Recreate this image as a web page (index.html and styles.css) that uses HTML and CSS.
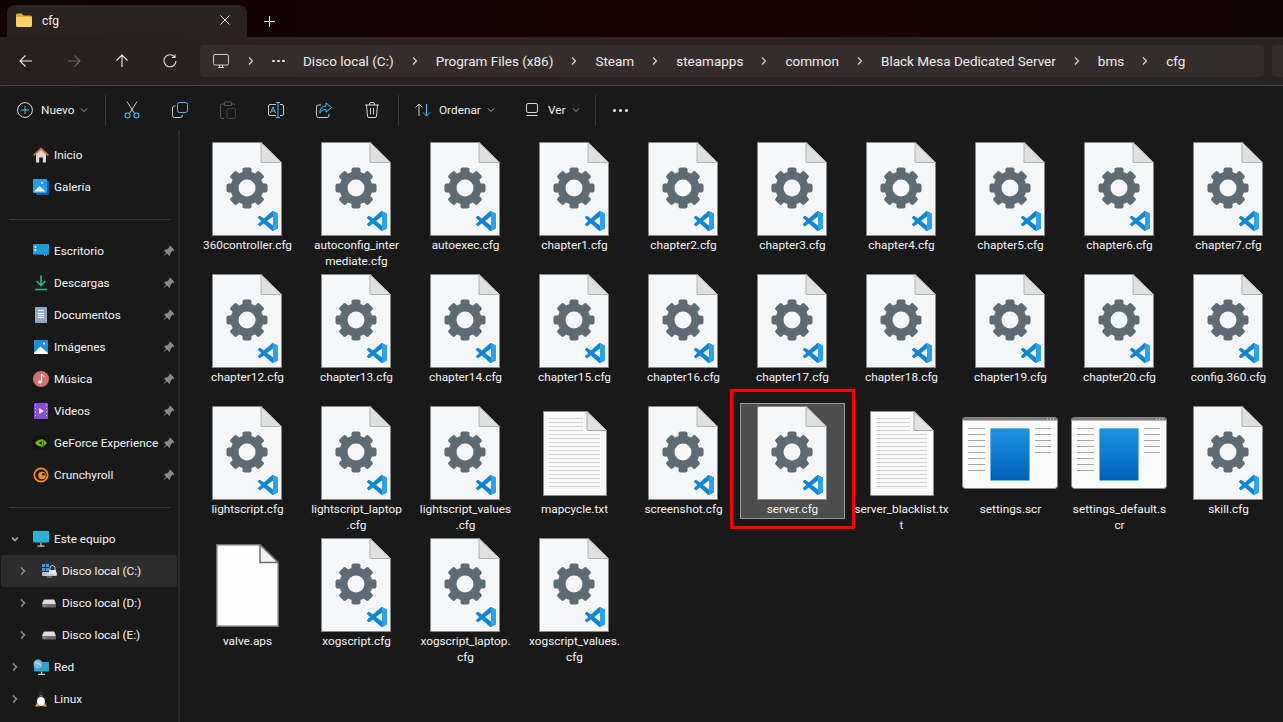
FILE: index.html
```html
<!DOCTYPE html>
<html lang="es">
<head>
    <meta charset="UTF-8">
    <title>cfg - Explorador de archivos</title>
    <link rel="stylesheet" href="styles.css">
</head>
<body>
<!-- shared icons -->
<svg class="defs" width="0" height="0">
    <symbol id="gear" viewBox="0 0 44 44">
        <g fill="#5f6b72">
            <rect x="17.5" y="1.5" width="9" height="41" rx="2"/>
            <rect x="17.5" y="1.5" width="9" height="41" rx="2" transform="rotate(45 22 22)"/>
            <rect x="17.5" y="1.5" width="9" height="41" rx="2" transform="rotate(90 22 22)"/>
            <rect x="17.5" y="1.5" width="9" height="41" rx="2" transform="rotate(135 22 22)"/>
            <circle cx="22" cy="22" r="16.5"/>
        </g>
        <circle cx="22" cy="22" r="8.5" fill="#f5f7f9"/>
    </symbol>
    <symbol id="vscode" viewBox="0 0 24 24">
        <path fill="#0e86d4" d="M23.15 2.587L18.21.21a1.494 1.494 0 0 0-1.705.29l-9.46 8.63-4.12-3.128a.999.999 0 0 0-1.276.057L.327 7.261A1 1 0 0 0 .326 8.74L3.899 12 .326 15.26a1 1 0 0 0 .001 1.479L1.65 17.94a.999.999 0 0 0 1.276.057l4.12-3.128 9.46 8.63a1.492 1.492 0 0 0 1.704.29l4.942-2.377A1.5 1.5 0 0 0 24 20.06V3.939a1.5 1.5 0 0 0-.85-1.352zm-5.146 14.861L10.826 12l7.178-5.448v10.896z"/>
        <path fill="#2ba2ec" d="M18 0.1l5.15 2.487A1.5 1.5 0 0 1 24 3.939v16.12a1.5 1.5 0 0 1-.85 1.354L18 23.9z"/>
    </symbol>
    <symbol id="cfg" viewBox="0 0 70 94">
        <path d="M.5.5H49L69.5 20.5V93.5H.5Z" fill="#f5f7f9" stroke="#85898c"/>
        <path d="M49 .5V20.5H69.5Z" fill="#dfe0e0" stroke="#b0b2b3"/>
        <use href="#gear" x="13" y="24" width="44" height="44"/>
        <use href="#vscode" x="46" y="69" width="20" height="20"/>
    </symbol>
    <symbol id="txt" viewBox="0 0 64 85">
        <path d="M.5.5H44L63.5 19.5V84.5H.5Z" fill="#fafafa" stroke="#8d8d8d"/>
        <path d="M44 .5V19.5H63.5Z" fill="#e2e2e2" stroke="#a8a8a8"/>
        <path d="M6 7.5H40M6 11.5H40M6 15.5H40M6 19.5H40M6 23.5H57M6 27.5H57M6 31.5H57M6 35.5H57M6 39.5H57M6 43.5H57M6 47.5H57M6 51.5H57M6 55.5H57M6 59.5H57M6 63.5H57M6 67.5H57M6 71.5H57M6 75.5H57" stroke="#d2d2d2"/>
    </symbol>
    <symbol id="aps" viewBox="0 0 63 83">
        <path d="M.75.75H44L62.25 18.5V82.25H.75Z" fill="#fdfdfd" stroke="#707070" stroke-width="1.500"/>
        <path d="M44 .75V18.5H62.25Z" fill="#f2f2f2" stroke="#707070" stroke-width="1.500"/>
    </symbol>
    <linearGradient id="scrblue" x1="0" y1="0" x2="0" y2="1">
        <stop offset="0" stop-color="#1b95e0"/>
        <stop offset="1" stop-color="#0061b5"/>
    </linearGradient>
    <symbol id="scr" viewBox="0 0 96 72">
        <rect x=".5" y=".5" width="95" height="71" rx="3" fill="#fbfbfb" stroke="#8a8a88"/>
        <path d="M0 3.500A3 3 0 0 1 3 .5H93A3 3 0 0 1 96 3.500Z" fill="#7e7d7a"/>
        <path d="M85 2H86M88 2H89M91 2H92" stroke="#d8d8d8"/>
        <path d="M6 11.500H23M6 17.500H23M6 23.500H23M6 29.500H23M6 35.500H23M6 41.500H23M6 47.500H23M6 53.500H23M73 11.500H89M73 17.500H89M73 23.500H89M73 29.500H89M73 35.500H89" stroke="#a8a8a8"/>
        <rect x="28.500" y="11.500" width="39" height="52" rx="1" fill="url(#scrblue)" stroke="#6cb6ea"/>
    </symbol>
    <symbol id="pin" viewBox="0 0 12 12">
        <path fill="#868b90" d="M7 .6l4.400 4.400-1 .9-.8-.2L7.400 7.900l-.2 2-1 .9L3.900 8.500 1 11l-.3-.3L3.300 7.800 1.100 5.500l1-.9 2-.2 2.100-2.100-.2-.8Z"/>
    </symbol>
    <symbol id="drive" viewBox="0 0 16 16">
        <path fill="#dcdcdc" d="M3 4.500h10l2 4.500H1Z"/>
        <rect x="1" y="9" width="14" height="3.500" rx=".8" fill="#6b6b6b"/>
        <rect x="2.500" y="10" width="2" height="1.200" fill="#58d06a"/>
    </symbol>
    <symbol id="chev" viewBox="0 0 8 8">
        <path d="M2 .5 5.500 4 2 7.500" fill="none" stroke="currentColor"/>
    </symbol>
    <symbol id="caret" viewBox="0 0 8 8">
        <path d="M1 2.500 4 5.500 7 2.500" fill="none" stroke="currentColor"/>
    </symbol>
</svg>

<div class="titlebar">
    <div class="tab">
        <svg class="tab-folder" viewBox="0 0 16 14" width="16" height="14">
            <path fill="#e8a822" d="M0 2a1.500 1.500 0 0 1 1.500-1.500h4L7.500 2.500h7A1.500 1.500 0 0 1 16 4v1H0Z"/>
            <path fill="#fcd364" d="M0 4h16v8.500a1.500 1.500 0 0 1-1.500 1.500h-13A1.500 1.500 0 0 1 0 12.500Z"/>
        </svg>
        <span class="tab-name">cfg</span>
        <svg class="tab-close" viewBox="0 0 10 10" width="10" height="10"><path d="M.5.500l9 9M9.500.500l-9 9" stroke="#e6e6e6" fill="none"/></svg>
    </div>
    <svg class="tab-new" viewBox="0 0 11 11" width="11" height="11"><path d="M5.500 0v11M0 5.500h11" stroke="#eee" fill="none"/></svg>
</div>

<div class="navbar">
    <div class="nav-btns">
        <button class="nav-btn"><svg viewBox="0 0 14 14" width="14" height="14"><path d="M13 7H1M6.500 1.500 1 7l5.500 5.500" fill="none" stroke="#efefef" stroke-width="1.100"/></svg></button>
        <button class="nav-btn"><svg viewBox="0 0 14 14" width="14" height="14"><path d="M1 7H13M7.500 1.500 13 7l-5.500 5.500" fill="none" stroke="#6c6766" stroke-width="1.100"/></svg></button>
        <button class="nav-btn"><svg viewBox="0 0 14 14" width="14" height="14"><path d="M7 13V1M1.500 6.500 7 1l5.500 5.500" fill="none" stroke="#efefef" stroke-width="1.100"/></svg></button>
        <button class="nav-btn"><svg viewBox="0 0 14 14" width="14" height="14"><path d="M11.500 2.800A6 6 0 1 0 13 7M12 .5v3H9" fill="none" stroke="#dedede" stroke-width="1.100"/></svg></button>
    </div>
    <div class="address">
        <svg class="addr-pc" viewBox="0 0 16 15" width="16" height="15"><rect x=".5" y=".5" width="15" height="10.500" rx="1.500" fill="none" stroke="#cfcbca"/><path d="M5 13.500h6M6.500 11v2.500M9.500 11v2.500" stroke="#cfcbca" fill="none"/></svg>
        <svg class="chev"><use href="#chev"/></svg>
        <span class="addr-dots"><i></i><i></i><i></i></span>
        <span class="crumb">Disco local (C:)</span>
        <svg class="chev"><use href="#chev"/></svg>
        <span class="crumb">Program Files (x86)</span>
        <svg class="chev"><use href="#chev"/></svg>
        <span class="crumb">Steam</span>
        <svg class="chev"><use href="#chev"/></svg>
        <span class="crumb">steamapps</span>
        <svg class="chev"><use href="#chev"/></svg>
        <span class="crumb">common</span>
        <svg class="chev"><use href="#chev"/></svg>
        <span class="crumb">Black Mesa Dedicated Server</span>
        <svg class="chev"><use href="#chev"/></svg>
        <span class="crumb">bms</span>
        <svg class="chev"><use href="#chev"/></svg>
        <span class="crumb">cfg</span>
    </div>
    <div class="search"></div>
</div>

<div class="toolbar">
    <button class="tool tool-new">
        <svg viewBox="0 0 16 16" width="16" height="16"><circle cx="8" cy="8" r="7.400" fill="none" stroke="#d6d6d6"/><path d="M8 4v8M4 8h8" stroke="#4cc2ff" fill="none"/></svg>
        <span>Nuevo</span>
        <svg class="caret"><use href="#caret"/></svg>
    </button>
    <div class="tool-sep tool-sep-first"></div>
    <button class="tool tool-icon"><svg viewBox="0 0 16 18" width="16" height="18"><path d="M3 .5 10.500 12.500M13 .5 5.500 12.500" fill="none" stroke="#cfcfcf"/><circle cx="3.500" cy="14.500" r="2.500" fill="none" stroke="#4cc2ff" stroke-width="1.100"/><circle cx="12.500" cy="14.500" r="2.500" fill="none" stroke="#4cc2ff" stroke-width="1.100"/></svg></button>
    <button class="tool tool-icon"><svg viewBox="0 0 16 16" width="16" height="16"><rect x="5.500" y=".5" width="10" height="10" rx="2" fill="none" stroke="#4cc2ff"/><path d="M3.500 4H2.500A2 2 0 0 0 .5 6v7.500a2 2 0 0 0 2 2H8A2.500 2.500 0 0 0 10.500 13" fill="none" stroke="#cfcfcf"/></svg></button>
    <button class="tool tool-icon"><svg viewBox="0 0 16 18" width="16" height="18"><path d="M4 3H2a1.500 1.500 0 0 0-1.500 1.500v11.500A1.500 1.500 0 0 0 2 17.500h2M12 3h2a1.500 1.500 0 0 1 1 1M4.500 1h7v3.500h-7Z" fill="none" stroke="#555"/><rect x="7" y="7.500" width="8.500" height="10" rx="1.500" fill="none" stroke="#2c4a5e"/></svg></button>
    <button class="tool tool-icon"><svg viewBox="0 0 16 16" width="16" height="16"><path d="M8 2.500H2A1.500 1.500 0 0 0 .5 4v8A1.500 1.500 0 0 0 2 13.500h6M12 2.500h2A1.500 1.500 0 0 1 15.500 4v8a1.500 1.500 0 0 1-1.500 1.500h-2" fill="none" stroke="#cfcfcf"/><path d="M8 .5h4M8 15.500h4M10 .5v15" fill="none" stroke="#4cc2ff"/><path d="M2.500 11 5 5l2.500 6M3.300 9h3.400" fill="none" stroke="#6fbfe8"/></svg></button>
    <button class="tool tool-icon"><svg viewBox="0 0 16 16" width="16" height="16"><path d="M5 3H2.500A2 2 0 0 0 .5 5v8.500a2 2 0 0 0 2 2H11a2 2 0 0 0 2-2V12" fill="none" stroke="#cfcfcf"/><path d="M10 .8 15.500 5.500 10 10.200V7.500C7 7.500 5 8.500 3.800 11c0-4 2-6.500 6.200-7Z" fill="none" stroke="#4cc2ff"/></svg></button>
    <button class="tool tool-icon"><svg viewBox="0 0 14 16" width="14" height="16"><path d="M0 3h14M4.500 3V2A1.500 1.500 0 0 1 6 .5h2A1.500 1.500 0 0 1 9.500 2V3M1.500 3 2.500 14a1.500 1.500 0 0 0 1.500 1.500h6A1.500 1.500 0 0 0 11.500 14L12.500 3M5.500 6v6.500M8.500 6v6.500" fill="none" stroke="#d6d6d6"/></svg></button>
    <div class="tool-sep"></div>
    <button class="tool tool-sort">
        <svg viewBox="0 0 16 14" width="16" height="14"><path d="M4 13V1M.5 4.500 4 1l3.500 3.500" fill="none" stroke="#cfcfcf"/><path d="M11.500 1V13M8 9.500l3.500 3.500L15 9.500" fill="none" stroke="#4cc2ff"/></svg>
        <span>Ordenar</span>
        <svg class="caret"><use href="#caret"/></svg>
    </button>
    <button class="tool tool-view">
        <svg viewBox="0 0 14 14" width="14" height="14"><rect x="1.500" y=".5" width="11" height="9" rx="1.500" fill="none" stroke="#d6d6d6"/><path d="M1.500 12.500h11" stroke="#d6d6d6" fill="none"/></svg>
        <span>Ver</span>
        <svg class="caret"><use href="#caret"/></svg>
    </button>
    <div class="tool-sep tool-sep-last"></div>
    <button class="tool tool-more"><span class="more-dot"></span><span class="more-dot"></span><span class="more-dot"></span></button>
</div>

<div class="main">
    <nav class="sidebar">
        <a class="side-row">
            <svg class="side-icon" viewBox="0 0 16 16"><path fill="#d9d5d1" d="M3 7l5-4.500L13 7v8.500H9.800V10.500H6.200v5H3Z"/><path fill="#e8752a" d="M8 .5 16 7.800l-1 1.100L8 2.600 1 8.900 0 7.800Z"/></svg>
            <span>Inicio</span>
        </a>
        <a class="side-row">
            <svg class="side-icon" viewBox="0 0 16 16"><rect x="3" y="2" width="13" height="14" rx="1" fill="#0f5ea6"/><rect y="0" width="14" height="14" rx="1" fill="#1fa0ec"/><path fill="#fff" d="M1 12.500 6.500 7l6 5.500Z"/><circle cx="9" cy="4" r="1" fill="#fff"/></svg>
            <span>Galería</span>
        </a>
        <div class="side-sep"></div>
        <a class="side-row">
            <svg class="side-icon" viewBox="0 0 16 16"><rect y="1" width="16" height="11" rx="1" fill="#1f9ad6"/><rect x="1.500" y="3" width="1.800" height="1.800" fill="#fff"/><rect x="1.500" y="6" width="1.800" height="1.800" fill="#fff"/><path d="M0 11h16v1H0Z" fill="#0d6ca8"/><rect x="11" y="11.500" width="1" height="1" fill="#fff"/><rect x="13" y="11.500" width="1" height="1" fill="#fff"/></svg>
            <span>Escritorio</span>
            <svg class="side-pin"><use href="#pin"/></svg>
        </a>
        <a class="side-row">
            <svg class="side-icon" viewBox="0 0 16 16"><path d="M8 .5V10M3.500 6 8 10.500 12.500 6" fill="none" stroke="#2bb392" stroke-width="1.600"/><path d="M2 14.500h12" stroke="#2bb392" stroke-width="1.600"/></svg>
            <span>Descargas</span>
            <svg class="side-pin"><use href="#pin"/></svg>
        </a>
        <a class="side-row">
            <svg class="side-icon" viewBox="0 0 16 16"><rect x="2" width="12" height="16" rx="1" fill="#8fa6c4"/><path d="M5 3.500h6M5 6.500h6M5 8.500h6M5 10.500h6" stroke="#fff"/></svg>
            <span>Documentos</span>
            <svg class="side-pin"><use href="#pin"/></svg>
        </a>
        <a class="side-row">
            <svg class="side-icon" viewBox="0 0 16 16"><rect x="1" y="1" width="14" height="14" fill="#1a8fdc"/><path fill="#fff" d="M1 14 7.500 7.500l7.500 6.500v1H1Z"/><circle cx="11" cy="4.500" r="1.100" fill="#fff"/></svg>
            <span>Imágenes</span>
            <svg class="side-pin"><use href="#pin"/></svg>
        </a>
        <a class="side-row">
            <svg class="side-icon" viewBox="0 0 16 16"><circle cx="8" cy="8" r="8" fill="#d46f70"/><path d="M8.500 3v8" stroke="#fff" stroke-width="1.200"/><path d="M8.500 3c.5 1.500 2.500 1.500 3 3" stroke="#fff" fill="none"/><circle cx="6.800" cy="11" r="1.800" fill="#fff"/></svg>
            <span>Música</span>
            <svg class="side-pin"><use href="#pin"/></svg>
        </a>
        <a class="side-row">
            <svg class="side-icon" viewBox="0 0 16 16"><rect x="1" y="0" width="14" height="16" rx="1" fill="#8a4bd8"/><path fill="#f4eefc" d="M6 5l5 3-5 3Z"/><path d="M2.500 1.500v1M2.500 5v1M2.500 8.500v1M2.500 12v1M13.500 1.500v1M13.500 5v1M13.500 8.500v1M13.500 12v1" stroke="#e3d4f8"/></svg>
            <span>Videos</span>
            <svg class="side-pin"><use href="#pin"/></svg>
        </a>
        <a class="side-row">
            <svg class="side-icon" viewBox="0 0 16 16"><rect width="16" height="16" fill="#121412"/><path fill="#76b900" d="M2 8c2-2.800 4.500-3.700 8-3.700v7.400C6.500 11.700 4 10.800 2 8Z"/><path fill="#121412" d="M6 8c1-1.200 2-1.500 3-1.500v3c-1 0-2-.300-3-1.500Z"/><path fill="#76b900" d="M10.500 4.500 14 8l-3.500 3.500Z"/></svg>
            <span>GeForce Experience</span>
            <svg class="side-pin"><use href="#pin"/></svg>
        </a>
        <a class="side-row">
            <svg class="side-icon" viewBox="0 0 16 16"><circle cx="8" cy="8" r="6.700" fill="none" stroke="#f78b24" stroke-width="1.800"/><circle cx="9" cy="8.500" r="3.800" fill="#f78b24"/><circle cx="10.300" cy="7.200" r="1.300" fill="#191919"/></svg>
            <span>Crunchyroll</span>
            <svg class="side-pin"><use href="#pin"/></svg>
        </a>
        <div class="side-sep"></div>
        <a class="side-row">
            <svg class="side-arrow side-arrow-open"><use href="#caret"/></svg>
            <svg class="side-icon" viewBox="0 0 16 16"><rect width="16" height="11.500" rx="1" fill="#2ab3d8"/><path d="M8 11.500V15M4.500 15.200h7" stroke="#c5c9cc" stroke-width="1.200"/></svg>
            <span>Este equipo</span>
        </a>
        <a class="side-row side-sub side-active">
            <svg class="side-arrow"><use href="#chev"/></svg>
            <svg class="side-icon" viewBox="0 0 16 16"><path fill="#3d9be8" d="M1 1h3v3H1ZM5 1h3v3H5ZM1 5h3v3H1ZM5 5h3v3H5Z"/><rect x="1" y="9" width="15" height="4" rx="1" fill="#c8ccd0"/><path d="M9 8V5a2.500 2.500 0 0 1 5 0v3" fill="none" stroke="#c8ccd0"/><rect x="8" y="7" width="7" height="4" fill="#e5e5e5"/><rect x="2" y="10.500" width="2" height="1" fill="#4fc466"/><path d="M6 14h5" stroke="#999"/></svg>
            <span>Disco local (C:)</span>
        </a>
        <a class="side-row side-sub">
            <svg class="side-arrow"><use href="#chev"/></svg>
            <svg class="side-icon"><use href="#drive"/></svg>
            <span>Disco local (D:)</span>
        </a>
        <a class="side-row side-sub">
            <svg class="side-arrow"><use href="#chev"/></svg>
            <svg class="side-icon"><use href="#drive"/></svg>
            <span>Disco local (E:)</span>
        </a>
        <a class="side-row">
            <svg class="side-arrow"><use href="#chev"/></svg>
            <svg class="side-icon" viewBox="0 0 16 16"><rect x="1" y="3" width="15" height="9.500" rx="1" fill="#2aa5d0"/><path d="M8.500 12.500V15M5 15.300h7" stroke="#c5c9cc" stroke-width="1.200"/><circle cx="5" cy="5" r="4.500" fill="#7fb6e6"/><path d="M2 3c2 .5 2 2 4 2s1 2 2 2" stroke="#d8ecfa" fill="none"/></svg>
            <span>Red</span>
        </a>
        <a class="side-row">
            <svg class="side-arrow"><use href="#chev"/></svg>
            <svg class="side-icon" viewBox="0 0 16 16"><ellipse cx="8" cy="3.500" rx="2.600" ry="3.200" fill="#2e2e2e"/><ellipse cx="8" cy="10" rx="5" ry="5.500" fill="#2e2e2e"/><ellipse cx="8" cy="10.500" rx="4" ry="4.500" fill="#fff"/><path fill="#eda21f" d="M7 4.500h2L8 6ZM2 15.500l2-3.500 2.500 3.500ZM14 15.500l-2-3.500-2.500 3.500Z"/></svg>
            <span>Linux</span>
        </a>
    </nav>

    <section class="files">
        <div class="file"><svg class="ico-cfg"><use href="#cfg"/></svg><div class="file-name">360controller.cfg</div></div>
        <div class="file"><svg class="ico-cfg"><use href="#cfg"/></svg><div class="file-name">autoconfig_inter<br>mediate.cfg</div></div>
        <div class="file"><svg class="ico-cfg"><use href="#cfg"/></svg><div class="file-name">autoexec.cfg</div></div>
        <div class="file"><svg class="ico-cfg"><use href="#cfg"/></svg><div class="file-name">chapter1.cfg</div></div>
        <div class="file"><svg class="ico-cfg"><use href="#cfg"/></svg><div class="file-name">chapter2.cfg</div></div>
        <div class="file"><svg class="ico-cfg"><use href="#cfg"/></svg><div class="file-name">chapter3.cfg</div></div>
        <div class="file"><svg class="ico-cfg"><use href="#cfg"/></svg><div class="file-name">chapter4.cfg</div></div>
        <div class="file"><svg class="ico-cfg"><use href="#cfg"/></svg><div class="file-name">chapter5.cfg</div></div>
        <div class="file"><svg class="ico-cfg"><use href="#cfg"/></svg><div class="file-name">chapter6.cfg</div></div>
        <div class="file"><svg class="ico-cfg"><use href="#cfg"/></svg><div class="file-name">chapter7.cfg</div></div>

        <div class="file"><svg class="ico-cfg"><use href="#cfg"/></svg><div class="file-name">chapter12.cfg</div></div>
        <div class="file"><svg class="ico-cfg"><use href="#cfg"/></svg><div class="file-name">chapter13.cfg</div></div>
        <div class="file"><svg class="ico-cfg"><use href="#cfg"/></svg><div class="file-name">chapter14.cfg</div></div>
        <div class="file"><svg class="ico-cfg"><use href="#cfg"/></svg><div class="file-name">chapter15.cfg</div></div>
        <div class="file"><svg class="ico-cfg"><use href="#cfg"/></svg><div class="file-name">chapter16.cfg</div></div>
        <div class="file"><svg class="ico-cfg"><use href="#cfg"/></svg><div class="file-name">chapter17.cfg</div></div>
        <div class="file"><svg class="ico-cfg"><use href="#cfg"/></svg><div class="file-name">chapter18.cfg</div></div>
        <div class="file"><svg class="ico-cfg"><use href="#cfg"/></svg><div class="file-name">chapter19.cfg</div></div>
        <div class="file"><svg class="ico-cfg"><use href="#cfg"/></svg><div class="file-name">chapter20.cfg</div></div>
        <div class="file"><svg class="ico-cfg"><use href="#cfg"/></svg><div class="file-name">config.360.cfg</div></div>

        <div class="file"><svg class="ico-cfg"><use href="#cfg"/></svg><div class="file-name">lightscript.cfg</div></div>
        <div class="file"><svg class="ico-cfg"><use href="#cfg"/></svg><div class="file-name">lightscript_laptop<br>.cfg</div></div>
        <div class="file"><svg class="ico-cfg"><use href="#cfg"/></svg><div class="file-name">lightscript_values<br>.cfg</div></div>
        <div class="file"><svg class="ico-txt"><use href="#txt"/></svg><div class="file-name">mapcycle.txt</div></div>
        <div class="file"><svg class="ico-cfg"><use href="#cfg"/></svg><div class="file-name">screenshot.cfg</div></div>
        <div class="file file-selected"><svg class="ico-cfg"><use href="#cfg"/></svg><div class="file-name">server.cfg</div></div>
        <div class="file"><svg class="ico-txt"><use href="#txt"/></svg><div class="file-name">server_blacklist.tx<br>t</div></div>
        <div class="file"><svg class="ico-scr"><use href="#scr"/></svg><div class="file-name">settings.scr</div></div>
        <div class="file"><svg class="ico-scr"><use href="#scr"/></svg><div class="file-name">settings_default.s<br>cr</div></div>
        <div class="file"><svg class="ico-cfg"><use href="#cfg"/></svg><div class="file-name">skill.cfg</div></div>

        <div class="file"><svg class="ico-aps"><use href="#aps"/></svg><div class="file-name">valve.aps</div></div>
        <div class="file"><svg class="ico-cfg"><use href="#cfg"/></svg><div class="file-name">xogscript.cfg</div></div>
        <div class="file"><svg class="ico-cfg"><use href="#cfg"/></svg><div class="file-name">xogscript_laptop.<br>cfg</div></div>
        <div class="file"><svg class="ico-cfg"><use href="#cfg"/></svg><div class="file-name">xogscript_values.<br>cfg</div></div>
    </section>
</div>
</body>
</html>
```

FILE: styles.css
```css
* { box-sizing: border-box; }
html, body { margin: 0; height: 100%; }
body {
    width: 1283px; height: 722px; overflow: hidden;
    display: flex; flex-direction: column;
    background: #191919; color: #fff;
    font-family: Roboto, "Open Sans", "Liberation Sans", sans-serif;
    font-size: 11.8px;
}
button {
    background: none; border: none; padding: 0; margin: 0;
    color: inherit; font: inherit;
}
.defs { position: absolute; }

/* title bar */
.titlebar {
    height: 37px; flex: none; padding: 5px 0 0 7px;
    display: flex; align-items: flex-start;
    background: linear-gradient(90deg, #0f0305 0%, #170103 45%, #180203 70%, #0f0506 100%);
}
.tab {
    width: 240px; height: 32px; padding-left: 9px;
    display: flex; align-items: center;
    background: #2a2221; border-radius: 8px 8px 0 0;
}
.tab-folder { flex: none; margin-top: -2px; }
.tab-name { margin-left: 10px; font-size: 12px; flex: 1; color: #f5f5f5; }
.tab-close { margin: -2px 17px 0 0; }
.tab-new { margin: 11px 0 0 17px; }

/* navigation row */
.navbar {
    height: 49px; flex: none; padding-left: 2px;
    display: flex; align-items: center;
    background: linear-gradient(90deg, #282020 0%, #2c2221 50%, #292423 100%);
    border-bottom: 1px solid #4a4645;
}
.nav-btns { display: flex; flex: none; width: 192px; margin-right: 6px; }
.nav-btn {
    width: 48px; height: 32px;
    display: flex; align-items: center; justify-content: center;
}
.address {
    flex: none; width: 1064px; height: 32px; padding-left: 13px;
    display: flex; align-items: center; gap: 17px;
    background: #352d2c; border-radius: 4px;
    font-size: 13.5px; color: #f0eeee;
}
.addr-pc { flex: none; margin-right: 1px; }
.addr-dots { display: flex; gap: 2.5px; width: 13px; margin-right: 1px; }
.addr-dots i { width: 2.5px; height: 2.5px; background: #e8e6e6; border-radius: 50%; flex: none; }
.chev { width: 8px; height: 8px; flex: none; color: #d8d5d4; stroke-width: 1.2px; }
.search {
    flex: none; width: 40px; height: 32px; margin-left: 8px;
    background: #352d2c; border-radius: 4px 0 0 4px;
}

/* command bar */
.toolbar {
    height: 44px; flex: none; padding: 4px 0 0 17px;
    display: flex; align-items: center;
    background: #191919;
}
.tool { display: flex; align-items: center; height: 32px; color: #efefef; }
.tool-new { width: 84px; }
.tool-new span { margin-left: 8px; }
.tool .caret { width: 8px; height: 8px; margin-left: 6px; color: #a8a8a8; }
.tool-sep { width: 1px; height: 31px; margin: 0 1px 0 2px; background: #3a3a3a; }
.tool-sep-first { margin: 0 2px 0 4px; }
.tool-icon { width: 48px; justify-content: center; }
.tool-sort { width: 98px; margin-left: 15px; }
.tool-sort span { margin-left: 8px; }
.tool-view { width: 63px; margin-left: 12px; }
.tool-view span { margin-left: 9px; }
.tool-sep-last { margin-left: 7px; }
.tool-more { margin-left: 16px; gap: 3px; }
.more-dot { width: 3px; height: 3px; border-radius: 50%; background: #efefef; }

/* main area */
.main { flex: 1; display: flex; min-height: 0; }
.sidebar {
    width: 180px; flex: none; padding: 9px 0 0 1px;
    border-right: 2px solid #2b2b2b;
}
.side-row {
    height: 32px; padding-left: 32px; position: relative;
    display: flex; align-items: center;
    color: #f4f4f4;
    margin-right: 1px;
}
.side-sub { padding-left: 40px; }
.side-active { background: #2d2d2d; border-radius: 3px; }
.side-icon { width: 16px; height: 16px; flex: none; margin-right: 5px; }
.side-pin { width: 12px; height: 12px; position: absolute; left: 162px; top: 10px; }
.side-arrow {
    width: 8px; height: 8px; position: absolute; left: 10px; top: 12px;
    color: #8a8a8a; stroke-width: 1.6px;
}
.side-sub .side-arrow { left: 18px; }
.side-arrow-open { color: #b0b0b0; }
.side-sep { height: 1px; margin: 15.5px 8px 15.5px 8px; background: #3b3b3b; }

/* file grid */
.files {
    flex: 1; padding: 9px 0 0 15px;
    display: grid; grid-template-columns: repeat(10, 105px);
    grid-auto-rows: 128px; gap: 4px;
    align-content: start; align-items: start;
}
.file {
    padding-top: 2px;
    display: grid; grid-template-rows: 94px auto; justify-items: center; align-items: center;
    position: relative;
    border: 1px solid transparent;
}
.ico-cfg { width: 70px; height: 94px; margin-right: 1px; }
.ico-txt { width: 64px; height: 85px; }
.ico-aps { width: 63px; height: 83px; margin-right: 1px; }
.ico-scr { width: 96px; height: 72px; margin-right: 1px; }
.file-name {
    margin-top: 2px; line-height: 15.5px; text-align: center;
    color: #f4f4f4; white-space: nowrap;
}
.file-selected {
    background: #4d4d4d; border-color: #9c9c9c;
}
.file-selected::after {
    content: ""; position: absolute;
    left: -11px; right: -11px; top: -15px; bottom: -11px;
    border: 3px solid #f00;
}
```
